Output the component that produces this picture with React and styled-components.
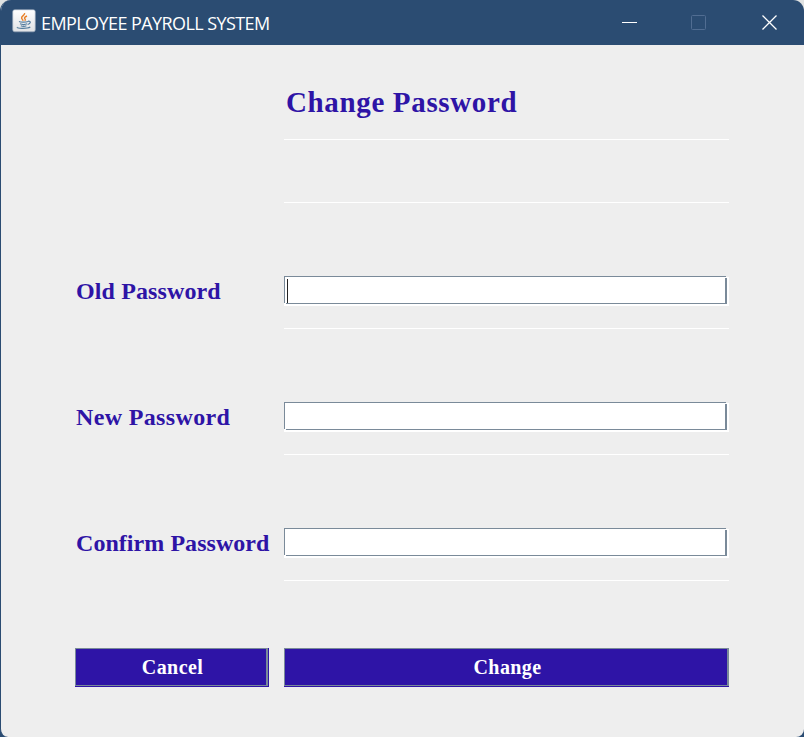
import React from "react";
import styled, { createGlobalStyle } from "styled-components";

const GlobalStyle = createGlobalStyle`
  * { box-sizing: border-box; }
  body { margin: 0; background: linear-gradient(#e0e2e2 50%, #2b4c72 50%); overflow: hidden; }
`;

const Window = styled.main`
  width: 804px;
  height: 737px;
  display: flex;
  flex-direction: column;
  overflow: hidden;
  border-left: 1px solid #2b4c72;
  border-radius: 11px 11px 8px 8px;
  background: #eeeeee;
  font-family: "Liberation Serif", "Times New Roman", serif;
`;

const TitleBar = styled.header`
  height: 45px;
  flex: none;
  display: flex;
  align-items: center;
  padding-left: 11px;
  background: #2b4c72;
  color: #fff;
`;

const AppIcon = styled.svg`
  width: 24px;
  height: 24px;
  flex: none;
  margin-bottom: 3px;
`;

const WindowTitle = styled.h1`
  margin: 0 auto 0 5px;
  font: 400 18px/24px "Open Sans", "Noto Sans", sans-serif;
  letter-spacing: -0.58px;
  white-space: nowrap;
  padding-top: 1px;
`;

const WindowControl = styled.button`
  width: ${(p) => p.$width || 70}px;
  height: 45px;
  padding: 0;
  border: 0;
  background: transparent;
  display: grid;
  place-items: center;
  color: ${(p) => (p.disabled ? "#516d92" : "#fff")};
  svg { display: block; }
`;

const Form = styled.form`
  display: grid;
  grid-template-columns: 194px 445px;
  grid-template-rows: 94px 63px 126px 126px 126px 107px;
  column-gap: 15px;
  padding-left: 74px;
`;

const Heading = styled.h2`
  grid-column: 2;
  margin: 0;
  padding: 41px 0 0 2px;
  border-bottom: 1px solid #fff;
  height: 95px;
  font-size: 29px;
  line-height: 32px;
  letter-spacing: 0.65px;
  white-space: nowrap;
  color: #2e14a6;
`;

const Divider = styled.hr`
  grid-column: 2;
  align-self: end;
  width: 445px;
  height: 1px;
  margin: 0 0 -1px;
  border: 0;
  background: #fff;
`;

const Label = styled.label`
  padding: 75px 0 0 1px;
  font-size: 24px;
  line-height: 28px;
  font-weight: 700;
  letter-spacing: ${(p) => p.$tracking}px;
  white-space: nowrap;
  color: #2e14a6;
`;

const FieldCell = styled.div`
  height: 127px;
  padding-top: 74px;
  border-bottom: 1px solid #fff;
`;

const FieldFrame = styled.div`
  width: 445px;
  height: 30px;
  background: linear-gradient(#eeeeee, #eeeeee) top / 100% 1px no-repeat #fff;
  padding: 0 2px 2px 0;
`;

const PasswordInput = styled.input`
  display: block;
  width: 443px;
  height: 28px;
  padding: 0 2px;
  border: 0;
  border-radius: 0;
  outline: none;
  background:
    ${(p) => p.$caret && "linear-gradient(#222, #222) 3px 3px / 1px 24px no-repeat,"}
    linear-gradient(#7a8a99, #7a8a99) 0 0 / 442px 1px no-repeat,
    linear-gradient(#7a8a99, #7a8a99) 0 0 / 1px 27px no-repeat,
    linear-gradient(#7a8a99, #7a8a99) 441px 2px / 2px 26px no-repeat,
    linear-gradient(#7a8a99, #7a8a99) 2px 27px / 441px 1px no-repeat,
    linear-gradient(#eeeeee, #eeeeee) 442px 0 / 1px 1px no-repeat,
    #fff;
`;

const Button = styled.button`
  height: 39px;
  align-self: start;
  margin-top: 68px;
  padding: 0;
  border: 0;
  border-bottom: 1px solid #2e14a6;
  border-right: ${(p) => (p.$edge ? "1px solid #2e14a6" : "0")};
  background: #2e14a6;
  color: #fff;
  font: 700 20px/36px "Liberation Serif", "Times New Roman", serif;
  letter-spacing: 0.4px;
`;

const ButtonFace = styled.span`
  display: block;
  height: 38px;
  padding-left: 3px;
  border: 1px solid #7a8a99;
  border-right-width: 2px;
`;

const fields = [
  { id: "old", text: "Old Password", tracking: 0.12, caret: true },
  { id: "new", text: "New Password", tracking: 0.35 },
  { id: "confirm", text: "Confirm Password", tracking: 0.05 },
];

function JavaIcon() {
  return (
    <AppIcon viewBox="0 0 24 24" aria-hidden="true">
      <defs>
        <linearGradient id="tile" x2="0" y2="1">
          <stop stopColor="#fff" />
          <stop offset="1" stopColor="#e0e2e5" />
        </linearGradient>
      </defs>
      <rect x=".7" y=".7" width="22.6" height="22.1" rx="2" fill="url(#tile)" stroke="#8fa1b4" strokeWidth=".7" />
      <path d="M12.6 4c.8 2-3.8 3.3-3 5.3.3.8 1.3 1.5 1.6 2.5M15 7c-3 1.2-2.8 2.3-1.8 3.3.4.5.1 1-.5 1.5" fill="none" stroke="#e9822b" strokeWidth="1.4" />
      <path d="M7 12.5c1.5.9 7.2.8 9 0M8 14.8c1.8.8 5.3.8 7.2 0M8.8 16.8c1.6.7 4 .7 5.6 0M16 12.3c3.5-.6 2.7 2.3-.3 3.2M5.5 18.1c-1.8 1.4 9.5 2 12.8-.1" fill="none" stroke="#557d9e" strokeWidth="1.2" />
    </AppIcon>
  );
}

export default function App() {
  return (
    <>
      <GlobalStyle />
      <Window>
        <TitleBar>
          <JavaIcon />
          <WindowTitle>EMPLOYEE PAYROLL SYSTEM</WindowTitle>
          <WindowControl aria-label="Minimize">
            <svg width="16" height="16"><path d="M1 7.5h15" stroke="currentColor" /></svg>
          </WindowControl>
          <WindowControl aria-label="Maximize" disabled>
            <svg width="16" height="16"><rect x=".5" y=".5" width="14" height="14" rx="1" fill="none" stroke="currentColor" /></svg>
          </WindowControl>
          <WindowControl aria-label="Close">
            <svg width="16" height="16"><path d="m1.5.5 14 14m0-14-14 14" stroke="currentColor" strokeWidth="1.3" /></svg>
          </WindowControl>
        </TitleBar>
        <Form onSubmit={(e) => e.preventDefault()}>
          <Heading>Change Password</Heading>
          <Divider />
          {fields.map((f) => (
            <React.Fragment key={f.id}>
              <Label htmlFor={f.id} $tracking={f.tracking}>{f.text}</Label>
              <FieldCell>
                <FieldFrame>
                  <PasswordInput id={f.id} type="password" $caret={f.caret} />
                </FieldFrame>
              </FieldCell>
            </React.Fragment>
          ))}
          <Button type="button" $edge><ButtonFace>Cancel</ButtonFace></Button>
          <Button type="submit"><ButtonFace>Change</ButtonFace></Button>
        </Form>
      </Window>
    </>
  );
}
